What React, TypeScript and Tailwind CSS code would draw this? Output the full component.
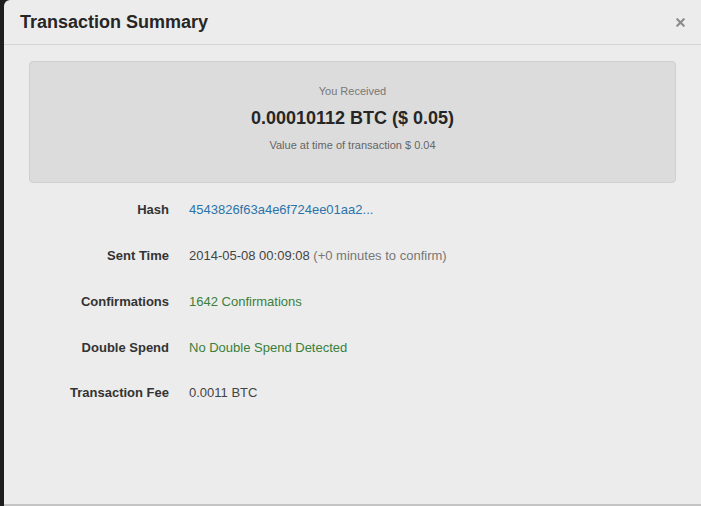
import { X } from 'lucide-react'

// Transaction summary modal (Bootstrap 2 look)

interface Row {
  label: string
  value: React.ReactNode
}

const rows: Row[] = [
  {
    label: 'Hash',
    value: <span className="text-[#2d73aa]">4543826f63a4e6f724ee01aa2...</span>,
  },
  {
    label: 'Sent Time',
    value: (
      <span className="text-[#444]">
        2014-05-08 00:09:08 <span className="text-[#777]">(+0 minutes to confirm)</span>
      </span>
    ),
  },
  {
    label: 'Confirmations',
    value: <span className="text-[#3a7f3a]">1642 Confirmations</span>,
  },
  {
    label: 'Double Spend',
    value: <span className="text-[#3a7f3a]">No Double Spend Detected</span>,
  },
  {
    label: 'Transaction Fee',
    value: <span className="text-[#444]">0.0011 BTC</span>,
  },
]

export default function App() {
  return (
    <div
      className="flex h-[506px] w-[701px] overflow-hidden bg-[#1e1e1e]"
      style={{ fontFamily: '"Liberation Sans", Arial, sans-serif' }}
    >
      <div className="ml-[4px] flex h-[506px] flex-1 flex-col rounded-tl-[6px] border-b-2 border-[#c4c4c4] bg-[#ececec]">
        {/* Header */}
        <div className="flex h-[45px] items-center justify-between border-b border-[#d4d4d4] pl-[16px] pr-[14px]">
          <h3 className="text-[18px] font-bold text-[#262626]">Transaction Summary</h3>
          <X className="h-[13px] w-[13px] text-[#8a8a8a]" strokeWidth={4} />
        </div>

        {/* Body */}
        <div className="px-[25px] pt-[16px]">
          <div className="flex h-[122px] flex-col items-center rounded-[4px] border border-[#cfcfcf] bg-[#dcdcdc] pt-[22px]">
            <div className="text-[11px] leading-[14px] text-[#777]">You Received</div>
            <div className="mt-[9px] text-[18px] font-bold leading-[22px] text-[#262626]">
              0.00010112 BTC ($ 0.05)
            </div>
            <div className="mt-[9px] text-[11px] leading-[14px] text-[#666]">
              Value at time of transaction $ 0.04
            </div>
          </div>

          <div className="mt-[17px] flex flex-col gap-[25.75px]">
            {rows.map((row) => (
              <div key={row.label} className="flex h-[20px] items-center gap-[20px] text-[13px]">
                <div className="w-[140px] text-right font-bold text-[#333]">{row.label}</div>
                <div>{row.value}</div>
              </div>
            ))}
          </div>
        </div>
      </div>
    </div>
  )
}
